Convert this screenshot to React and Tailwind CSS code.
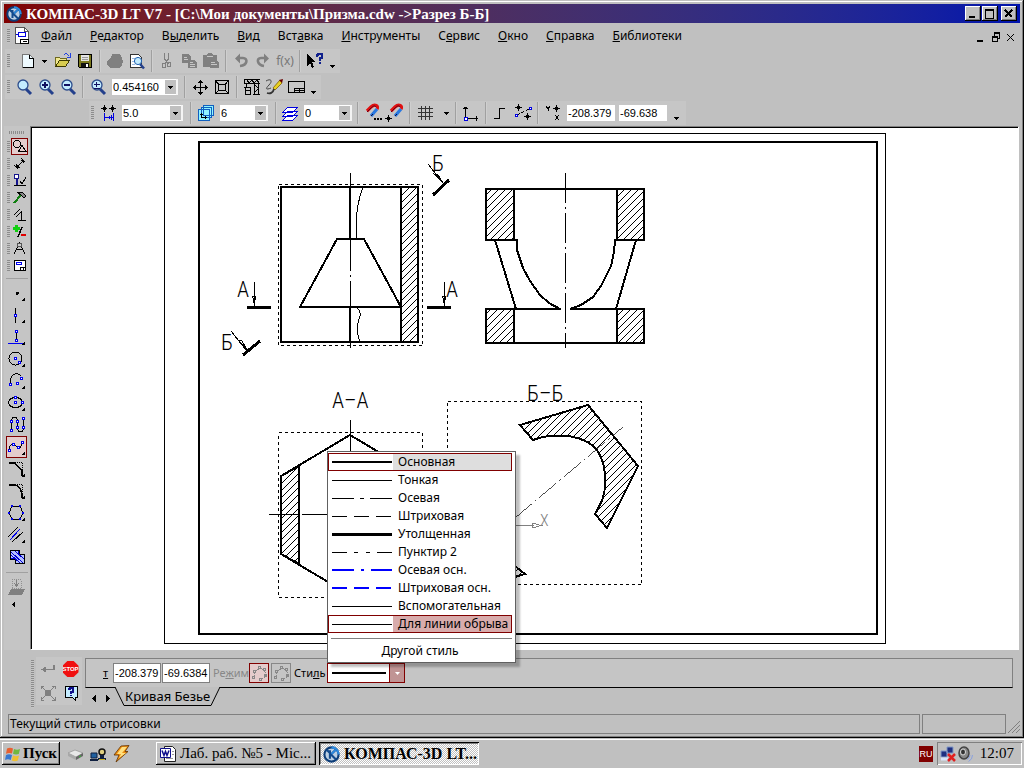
import React, { useState } from 'react';

const NUM_FONT = "font-['Liberation_Sans',sans-serif] text-[11px]";

// Small pixel icon, drawn on a square grid
const Icon = ({ size = 22, children, className = '' }) => (
  <svg
    width={size}
    height={size}
    viewBox={`0 0 ${size} ${size}`}
    fill="none"
    stroke="#000"
    shapeRendering="crispEdges"
    className={`shrink-0 ${className}`}
    aria-hidden="true"
  >
    {children}
  </svg>
);

const ToolButton = ({ label, children }) => (
  <button type="button" aria-label={label} className="flex h-[22px] w-[22px] shrink-0 items-center justify-center">
    {children}
  </button>
);

const Caret = ({ label, low }) => (
  <button type="button" aria-label={label} className={`flex h-[22px] w-3 shrink-0 justify-center ${low ? 'items-end pb-1' : 'items-center'}`}>
    <svg width="5" height="3" viewBox="0 0 5 3" aria-hidden="true" shapeRendering="crispEdges"><path d="M0 0h5v1H4v1H3v1H2V2H1V1H0z" /></svg>
  </button>
);

const Sep = () => <div className="mx-[3px] h-[22px] w-[2px] shrink-0 border-r border-[#cfcfcf] bg-[#a0a0a0]" />;

const Grip = ({ className = 'mr-[3px]' }) => (
  <div className={`ml-[2px] h-[14px] w-[3px] shrink-0 bg-[repeating-linear-gradient(#8c8c8c_0_1px,#c6c6c6_1px_2px)] ${className}`} />
);

const Combo = ({ label, value, className }) => (
  <div className={`relative h-4 shrink-0 border-r-2 border-[#f4f4f4] bg-white ${className}`}>
    <select aria-label={label} defaultValue={value} className={`block h-4 w-full appearance-none pl-px leading-4 outline-none ${NUM_FONT}`}>
      <option>{value}</option>
    </select>
    <span className="pointer-events-none absolute inset-y-px right-0 flex w-[11px] items-center justify-center bg-[#c0c0c0]">
      <svg width="5" height="3" viewBox="0 0 5 3" aria-hidden="true" shapeRendering="crispEdges"><path d="M0 0h5v1H4v1H3v1H2V2H1V1H0z" /></svg>
    </span>
  </div>
);

const KompasLogo = ({ size }) => (
  <svg width={size} height={size} viewBox="0 0 16 16" fill="none" className="shrink-0" aria-hidden="true">
    <circle cx="8" cy="8" r="6.7" fill="#bcd0e4" stroke="#0d3d78" strokeWidth="2" />
    <path d="M8 1.3A6.7 6.7 0 0 1 14.7 8" stroke="#2c8ae0" strokeWidth="2" />
    <path d="M3.5 3.5l3 3M6.5 4v8M12 3.5L7.5 8l4.5 4.5" stroke="#124a8c" strokeWidth="2" />
    <path d="M12 3.5L8 7.5" stroke="#2c8ae0" strokeWidth="1.6" />
  </svg>
);

const titleButton =
  'flex h-[15px] w-4 items-center justify-center bg-[#c0c0c0] shadow-[inset_-1px_-1px_#000,inset_1px_1px_#fff,inset_-2px_-2px_#808080]';

const TitleBar = () => (
  <header className="flex h-[19px] shrink-0 items-center bg-linear-to-r from-[#800000] to-[#0012ad] pr-[3px] pl-[2px] text-white">
    <KompasLogo size={16} />
    <h1 className="ml-1 flex-1 truncate font-['Liberation_Serif',serif] text-[15px] leading-[18px] font-bold">
      КОМПАС-3D LT V7 - [C:\Мои документы\Призма.cdw -&gt;Разрез Б-Б]
    </h1>
    <button type="button" aria-label="Свернуть" className={titleButton}>
      <Icon size={10}><path d="M1 8h6" strokeWidth="2" /></Icon>
    </button>
    <button type="button" aria-label="Развернуть" className={`ml-px ${titleButton}`}>
      <Icon size={10}><path d="M.5 1v8.5h8V1" /><path d="M0 1h9" strokeWidth="2" /></Icon>
    </button>
    <button type="button" aria-label="Закрыть" className={`ml-[3px] ${titleButton}`}>
      <Icon size={10}><path d="M1 1l7 7M8 1L1 8" strokeWidth="2" /></Icon>
    </button>
  </header>
);

const menu = [
  ['', 'Ф', 'айл'],
  ['', 'Р', 'едактор'],
  ['В', 'ы', 'делить'],
  ['', 'В', 'ид'],
  ['Вст', 'а', 'вка'],
  ['', 'И', 'нструменты'],
  ['С', 'е', 'рвис'],
  ['', 'О', 'кно'],
  ['', 'С', 'правка'],
  ['', 'Б', 'иблиотеки'],
];

const MenuBar = () => (
  <nav className="flex h-[25px] shrink-0 items-center pl-px">
    <Grip />
    <Icon size={18} className="mt-px">
      <path d="M2.500 .5h9l4 4v12h-13z" fill="#fff" stroke="#555" />
      <path d="M11.500 .5v4h4" stroke="#555" />
      <path d="M5.500 5.500h7v4h-7zM3 7.500h3" stroke="#0000e0" />
      <path d="M7.500 12.500h8v4h-8zM10 14.500h4" />
    </Icon>
    <div className="ml-[10px] flex gap-[18px]">
      {menu.map(([a, b, c]) => (
        <button key={b + c} type="button" className="text-[12px] leading-4">
          {a}<span className="underline">{b}</span>{c}
        </button>
      ))}
    </div>
    <div className="mr-1 ml-auto flex items-center gap-[3px] pt-1">
      <button type="button" aria-label="Свернуть документ"><Icon size={13}><path d="M6 10h6" strokeWidth="2" /></Icon></button>
      <button type="button" aria-label="Восстановить документ">
        <Icon size={13}><path d="M5.500 5V2.500h5v5H8M3.500 6.500h5v4h-5z" transform="translate(2 0)" /><path d="M7 2h6M5 6h6" strokeWidth="2" /></Icon>
      </button>
      <button type="button" aria-label="Закрыть документ"><Icon size={13}><path d="M4 3l7 7M11 3l-7 7" strokeWidth="1.400" /></Icon></button>
    </div>
  </nav>
);

const Lens = ({ children }) => (
  <Icon>
    <g shapeRendering="auto">
      <path d="M13 13l5 5" stroke="#24408c" strokeWidth="3" />
      <circle cx="10" cy="9" r="5" fill="#c4ecff" stroke="#2c4c8c" strokeWidth="1.300" />
    </g>
    <g stroke="#101060" strokeWidth="2">{children}</g>
  </Icon>
);

const StandardBar = () => (
  <div className="flex h-6 w-fit items-center bg-[#c6c6c6] pr-[2px]">
    <Grip className="mr-[6px]" />
    <ToolButton label="Создать">
      <Icon><path d="M6.500 4.500h7l4 4v9h-11z" fill="#eefaff" stroke="#777" /><path d="M13.500 4.500v4h4v9h-11" /></Icon>
    </ToolButton>
    <Caret label="Варианты создания" />
    <div className="w-[2px]" />
    <ToolButton label="Открыть">
      <Icon>
        <path d="M3.500 16.500v-9h4l1 1h6v3" fill="#f0e890" stroke="#706a20" />
        <path d="M3.500 16.500l4-6h10l-4 6z" fill="#d8cc50" stroke="#3c3800" />
        <path d="M11.500 5.500c2-3 4-2 6 1M18.500 3v4h-4" stroke="#2040e0" />
      </Icon>
    </ToolButton>
    <ToolButton label="Сохранить">
      <Icon>
        <path d="M4.500 4.500h13v13h-12l-1-1z" fill="#7c7a20" />
        <path d="M7 5h8v6H7z" fill="#e4e4e4" stroke="none" />
        <path d="M7 13h8v4H7z" fill="#111" stroke="none" /><path d="M12 14h2v3h-2z" fill="#fff" stroke="none" />
        <path d="M8 7.500h6M8 9.500h6" stroke="#999" />
      </Icon>
    </ToolButton>
    <Sep />
    <ToolButton label="Печать">
      <Icon><path d="M8 4h8l2 4 1 3-1 5-3 2H6l-3-3v-4l4-3z" fill="#808080" stroke="none" /></Icon>
    </ToolButton>
    <ToolButton label="Просмотр">
      <Icon>
        <path d="M4.500 4.500h8l3 3v10h-11z" fill="#fff" stroke="#333" /><path d="M6 8.500h3M6 11.500h3M6 14.500h3" stroke="#98b8e0" />
        <g shapeRendering="auto"><path d="M14 14l4 4.500" stroke="#24408c" strokeWidth="2.500" /><circle cx="12" cy="11" r="3.600" fill="#c4ecff" stroke="#2060b0" /></g>
      </Icon>
    </ToolButton>
    <Sep />
    <ToolButton label="Вырезать">
      <Icon><g stroke="#808080"><path d="M8.500 3v6l4 5M12.500 3v6l-4 5" strokeWidth="1.500" /><path d="M6.500 13.500h3v4h-3zM11.500 12.500h3v4h-3z" /></g></Icon>
    </ToolButton>
    <ToolButton label="Копировать">
      <Icon><path d="M4 4h6l3 3v3h3l3 3v5h-9v-5H4z" fill="#808080" stroke="none" /><path d="M6 7.500h3M6 9.500h4M12 12.500h3M12 14.500h5M12 16.500h5" stroke="#c6c6c6" /></Icon>
    </ToolButton>
    <ToolButton label="Вставить">
      <Icon><path d="M3 5h4l1-2h4l1 2h4v5l2 3v5h-9v-1H3z" fill="#808080" stroke="none" /><path d="M7 6.500h6M11 12.500h4M11 14.500h6" stroke="#c6c6c6" /></Icon>
    </ToolButton>
    <Sep />
    <ToolButton label="Отменить">
      <Icon><g shapeRendering="auto"><path d="M8 8h5c5 0 5 7-3 8" stroke="#808080" strokeWidth="2.600" /><path d="M5 8.500l5-5v10z" fill="#808080" stroke="none" /></g></Icon>
    </ToolButton>
    <ToolButton label="Повторить">
      <Icon><g shapeRendering="auto"><path d="M14 8H9c-5 0-4 7 3 8" stroke="#808080" strokeWidth="2.600" /><path d="M17 8.500l-5-5v10z" fill="#808080" stroke="none" /></g></Icon>
    </ToolButton>
    <ToolButton label="Переменные">
      <span className="font-['Noto_Sans',sans-serif] text-[12px] leading-4 text-[#777]">f(x)</span>
    </ToolButton>
    <Sep />
    <ToolButton label="Справка">
      <Icon>
        <path d="M3 4v12l3-3 2 5 2-1-2-5h4z" fill="#000" stroke="none" />
        <path d="M13 7V5h1V4h4v4h-2v3M15 13h2" stroke="#10208c" strokeWidth="2" />
      </Icon>
    </ToolButton>
    <Caret label="Ещё" low />
  </div>
);

const ViewBar = () => (
  <div className="flex h-6 w-fit items-center bg-[#c6c6c6] pr-[2px]">
    <Grip />
    <ToolButton label="Увеличить рамкой"><Lens /></ToolButton>
    <ToolButton label="Увеличить"><Lens><path d="M7 9h6M10 6v6" /></Lens></ToolButton>
    <ToolButton label="Уменьшить"><Lens><path d="M7 9h6" /></Lens></ToolButton>
    <Sep />
    <ToolButton label="Масштаб"><Lens><path d="M7 8.500h6M9.500 6v5M7 12.500h6" strokeWidth="1" /></Lens></ToolButton>
    <Combo label="Текущий масштаб" value="0.454160" className="mx-[3px] w-[66px]" />
    <Sep />
    <ToolButton label="Сдвинуть">
      <Icon><path d="M4 11.500h15M11.500 4v15" /><path d="M4 11.500l3-3v6zM19 11.500l-3-3v6zM11.500 4l-3 3h6zM11.500 19l-3-3h6z" fill="#000" stroke="none" /></Icon>
    </ToolButton>
    <ToolButton label="Показать всё">
      <Icon><path d="M4.500 4.500h13v13h-13zM7.500 8.500h7v6h-7zM5 5l3 4M17 5l-3 4M5 17l3-3M17 17l-3-3" /></Icon>
    </ToolButton>
    <Sep />
    <ToolButton label="Перестроить">
      <Icon>
        <path d="M3 3.500h16M3 7.500h16M3.500 4v4M6 4l2 3 3-3 2 3 3-3 2 3M13.500 8v10M17.500 8v10M14 9l3 3M17 13l-3 3M12 18.500h7" />
        <path d="M5.500 8v3M3 11.500h6M4.500 11v7h5v-7M4 14.500h6" />
      </Icon>
    </ToolButton>
    <ToolButton label="Свойства">
      <Icon>
        <g shapeRendering="auto">
          <path d="M3 5c5-3 7 0 3 4s-3 5 2 3" stroke="#444" />
          <path d="M17 4l2 3-7 7-2-2z" fill="#e8d020" stroke="#806000" strokeWidth=".8" />
          <path d="M16 4l3 3 1-4z" fill="#600" stroke="none" />
          <path d="M11 13c-1 4-4 5-7 4" stroke="#333" strokeWidth="1.800" />
        </g>
      </Icon>
    </ToolButton>
    <ToolButton label="Менеджер листов">
      <Icon><path d="M3.500 5.500h16v11h-16zM9.500 16v-4h10M9.500 14.500h10M14.500 12v4" /></Icon>
    </ToolButton>
    <Caret label="Ещё" low />
  </div>
);

const Magnet = () => (
  <g shapeRendering="auto" strokeWidth="3.200">
    <path d="M5 9l4-4c4-4 8-1 6 2" stroke="#e01010" />
    <path d="M15 7l-6 7" stroke="#2878e0" />
    <path d="M5 10l4-4c2-2 4-3 5-1" stroke="#600018" strokeWidth="1" />
    <path d="M9 14l2-2" stroke="#101040" strokeWidth="1" />
  </g>
);

const CurrentStateBar = () => (
  <div className="ml-[84px] flex h-6 w-fit items-center bg-[#c6c6c6] pr-1">
    <Grip />
    <ToolButton label="Шаг курсора">
      <Icon>
        <path d="M4 6.500h6M7.500 3v7M12 6.500h7M15.500 3v7M6.500 5.500h2v2h-2zM14.500 5.500h2v2h-2z" />
        <path d="M7.500 11v8M16.500 11v8M8 15.500h8M14 13v5M12 14v3" stroke="#0000e0" />
      </Icon>
    </ToolButton>
    <Combo label="Текущий шаг курсора" value="5.0" className="mr-1 ml-[3px] w-[61px]" />
    <Sep />
    <ToolButton label="Состояния видов">
      <Icon>
        <path d="M8.500 3.500h10v10h-10zM6.500 5.500h10v10h-10zM3.500 7.500h11v11h-11z" fill="#90f4ff" stroke="#1060c0" />
        <path d="M6.500 15v-4M5 12.500h3M6 15.500h6M10.500 14v3" />
      </Icon>
    </ToolButton>
    <Combo label="Текущий вид" value="6" className="mr-1 ml-[3px] w-12" />
    <Sep />
    <ToolButton label="Слои">
      <Icon>
        <g stroke="#0000e0" fill="#fff"><path d="M3 18l5-5h10l-5 5zM3 14l5-5h10l-5 5zM3 10l5-5h10l-5 5z" /></g>
      </Icon>
    </ToolButton>
    <Combo label="Текущий слой" value="0" className="mr-[2px] ml-[2px] w-12" />
    <Sep />
    <ToolButton label="Привязки"><Icon><Magnet /><path d="M12 17h2M15 17h2M18 17h2" strokeWidth="2" /></Icon></ToolButton>
    <ToolButton label="Запретить привязки"><Icon><g transform="translate(2 0)"><Magnet /></g><path d="M1 16.500h7M4.500 13v7M3.500 15.500h2v2h-2z" /></Icon></ToolButton>
    <Sep />
    <ToolButton label="Сетка"><Icon><path d="M4 6.500h15M4 10.500h15M4 14.500h15M7.500 4v14M11.500 4v14M15.500 4v14" stroke="#333" /></Icon></ToolButton>
    <div className="w-1" />
    <Caret label="Настройка сетки" />
    <Sep />
    <ToolButton label="Локальная СК">
      <Icon><path d="M5.500 15V5M3 6.500h5M4 5.500h3M7 16.500h11M16 14v5" /><path d="M4.500 15.500h3v3h-3z" fill="#fff" stroke="#0000e0" /></Icon>
    </ToolButton>
    <Sep />
    <ToolButton label="Ортогональное черчение"><Icon><path d="M4 16.500h5.500v-10h5.500" strokeWidth="1" /></Icon></ToolButton>
    <ToolButton label="Округление">
      <Icon><path d="M3 5.500h7M6.500 2v7M12 14.500h7M15.500 11v7M5.500 4.500h2v2h-2zM14.500 13.500h2v2h-2z" /><path d="M5 13l12-6" strokeDasharray="3 2" /><path d="M3.500 12.500h2v2h-2zM17.500 5.500h2v2h-2z" fill="#fff" stroke="#0000e0" /></Icon>
    </ToolButton>
    <Sep />
    <ToolButton label="Координаты">
      <Icon><path d="M4 4l2 3M8 4l-2 3M6.500 6v3M11 6.500h7M14.500 3v7M13.500 5.500h2v2h-2zM13 13l4 5M17 13l-4 5" /></Icon>
    </ToolButton>
    <input aria-label="Координата X" defaultValue="-208.379" className={`ml-[3px] h-4 w-12 bg-white pl-px outline-none ${NUM_FONT}`} />
    <input aria-label="Координата Y" defaultValue="-69.638" className={`mr-[3px] ml-1 h-4 w-12 bg-white pl-px outline-none ${NUM_FONT}`} />
    <Caret label="Ещё" low />
  </div>
);

// Blue square marker of a construction point
const P = ({ x, y }) => <rect x={x} y={y} width="2" height="2" fill="#fff" stroke="#0000f0" />;

const panels = [
  ['Геометрия', <g><circle cx="5" cy="5" r="3.500" /><path d="M10 6.500l-3.500 6h7.500z" /></g>],
  ['Размеры', <g><path d="M4 12l8-8M2 9l4 4M9 2l4 4" /><path d="M4 8v4h4zM8 4h4v4z" fill="#000" stroke="none" /></g>],
  ['Обозначения', <g><path d="M2.500 1.500h4v4h-4z" fill="#fff" stroke="#14148c" /><path d="M4.500 6v6" stroke="#14148c" strokeWidth="2" /><path d="M2 12.500h12M8 8l2 3 4-7" /></g>],
  ['Редактирование', <g><path d="M2 13l7-8" stroke="#108010" strokeWidth="2" /><path d="M5 2l5 0 4 4-2 2-3-3z" fill="#888" /></g>],
  ['Параметризация', <g><path d="M2 8l6-6M4 10l6-6M9.500 5v8M6 13.500h8" /></g>],
  ['Измерения', <g><path d="M4.500 1v7M1 4.500h7" stroke="#10d010" strokeWidth="3" /><path d="M6 13l4-10" strokeWidth="1.500" /><path d="M9 11h5" stroke="#e00000" strokeWidth="2" /></g>],
  ['Выделение', <g><path d="M7.500 1v2M6.500 4L2 13M8.500 4L13 13M4 8h7" /><circle cx="7.500" cy="4" r="2" fill="#ccc" stroke="#555" /></g>],
  ['Спецификация', <g><path d="M2.500 2.500h11v10h-11z" fill="#fff" /><path d="M4.500 4.500h5v2h-5z" stroke="#0000f0" /><path d="M8.500 12V9.500h5M11 10v3" /></g>],
];

const tools = [
  ['Точка', <path d="M10 10.500h3M11 9.500v3" strokeWidth="2" />],
  ['Вспомогательная прямая', <g><path d="M9.500 4v15" /><P x="8.500" y="10.500" /></g>],
  ['Отрезок', <g><path d="M10.500 5v10" /><path d="M2 17.500h17" stroke="#0000f0" /><P x="9.500" y="4.500" /><P x="9.500" y="13.500" /></g>],
  ['Окружность', <g><circle cx="9.500" cy="10.500" r="6.500" /><P x="8.500" y="9.500" /><P x="12.500" y="13.500" /></g>],
  ['Дуга', <g><path d="M4 13c0-8 6-12 11-7" /><P x="3.500" y="13.500" /><P x="10.500" y="12.500" /><P x="14.500" y="7.500" /></g>],
  ['Эллипс', <g><ellipse cx="9.500" cy="10.500" rx="7" ry="5" /><P x="8.500" y="4.500" /><P x="8.500" y="9.500" /><P x="15.500" y="9.500" /></g>],
  ['Непрерывный ввод объектов', <g><path d="M5.500 17V7c0-5 6-5 6 0v7c0 5 6 5 6 0V4" /><P x="4.500" y="6.500" /><P x="4.500" y="15.500" /><P x="10.500" y="6.500" /><P x="10.500" y="12.500" /><P x="16.500" y="3.500" /><P x="16.500" y="12.500" /></g>],
  ['Кривая Безье', <g><path d="M3 14c1-8 5-6 8-3s5-1 5-5" /><P x="2.500" y="13.500" /><P x="6.500" y="7.500" /><P x="11.500" y="10.500" /><P x="15.500" y="5.500" /></g>],
  ['Фаска', <g><path d="M3 5h6l7 8v5" strokeWidth="1.500" /><path d="M9 4.500h7.500v9" strokeDasharray="1 1" /></g>],
  ['Скругление', <g><path d="M3 5h4c6 0 9 5 9 13" strokeWidth="1.500" /><path d="M9 4.500h7.500v9" strokeDasharray="1 1" /></g>],
  ['Многоугольник', <g><path d="M6 4h8l3 7-3 6H6l-3-6z" /><path d="M5 4h2M13 4h2M2 11h2M16 11h2M5 17h2M13 17h2" stroke="#0000f0" strokeWidth="2" /></g>],
  ['Эквидистанта', <g><path d="M2 13L12 3M6 18L17 8" /><path d="M4 16L14 5" stroke="#0000f0" /></g>],
  ['Штриховка', <g><path d="M4.500 4.500h9v4h5v9h-9v-4h-5z" fill="#b4c0ff" strokeWidth="1.500" /><path d="M5 6l12 11M5 9l9 8M9 5l9 8M5 12l3 1M12 5l1 3" stroke="#0000d0" /></g>],
];

const LeftToolbar = () => (
  <aside aria-label="Компактная панель" className="flex w-[26px] shrink-0 flex-col bg-[#c5c5c5] pt-[5px]">
    <div className="mb-1 ml-[5px] h-[3px] w-4 bg-[repeating-linear-gradient(90deg,#8c8c8c_0_1px,#c6c6c6_1px_2px)]" />
    {panels.map(([label, art], i) => (
      <div key={label} className="flex h-[17px] shrink-0 items-center pl-px">
        <div className="ml-[2px] h-[11px] w-[3px] bg-[repeating-linear-gradient(#8c8c8c_0_1px,#c6c6c6_1px_2px)]" />
        <button type="button" aria-label={label} className={`ml-px border ${i === 0 ? 'border-[#800000] bg-[#e4cccc]' : 'border-transparent'}`}>
          <Icon size={15}>{art}</Icon>
        </button>
      </div>
    ))}
    <div className="mt-1 mb-[3px] ml-[2px] h-px w-[22px] bg-[#a0a0a0]" />
    {tools.map(([label, art]) => (
      <button
        key={label}
        type="button"
        aria-label={label}
        className={`ml-[2px] flex h-[22px] w-[21px] shrink-0 items-center justify-center border ${label === 'Кривая Безье' ? 'border-[#800000] bg-[#e4cccc]' : 'border-transparent'}`}
      >
        <Icon size={22}>
          {art}
          {!['Непрерывный ввод объектов', 'Штриховка'].includes(label) && <path d="M19 15v4h-4z" fill="#000" stroke="none" />}
        </Icon>
      </button>
    ))}
    <div className="mt-1 mb-[5px] ml-[2px] h-px w-[22px] bg-[#a0a0a0]" />
    <button type="button" aria-label="Редактировать" className="mx-auto">
      <Icon size={18}><path d="M4 1.500h9v9H4z" stroke="#909090" strokeDasharray="1 1" /><path d="M8.500 2v5M6 5l2.500 3L11 5" stroke="#808080" /><path d="M3 11h14l-3 6H0z" fill="#808080" stroke="none" /></Icon>
    </button>
    <button type="button" aria-label="Свернуть панель" className="mt-1 ml-1 w-fit">
      <Icon size={9}><path d="M7 2v5L4 4.500z" fill="#000" stroke="none" /></Icon>
    </button>
  </aside>
);

const cadText = {
  fontFamily: '"Roboto Condensed", Roboto, sans-serif',
  fontWeight: 300,
};

// Section areas filled with 45° lines
const hatched = [
  'M401 187h17v155h-17z',
  'M486 189h28v51h-28z',
  'M617 189h27v51h-27z',
  'M486 309h28v34h-28z',
  'M617 309h27v34h-27z',
  'M281 476l18-10v98l-18-10z',
  'M520 425l68-20 50 61-31 62-12-14c6-11 10-17 10-30 1-20-5-38-22-44-14-6-35-6-50 0z',
  'M505 558l20 16-10 3z',
];

const hatchLines = Array.from({ length: 150 }, (_, i) => `M${200 + i * 7} 180l-420 420`).join('');

const Drawing = () => (
  <svg viewBox="32 128 986 521" className="min-h-0 min-w-0 flex-1 bg-white" fill="none" stroke="#000" shapeRendering="crispEdges">
    <defs>
      <clipPath id="sections"><path d={hatched.join('')} /></clipPath>
    </defs>

    {/* Sheet frame */}
    <rect x="164.500" y="133.500" width="721" height="510" />
    <rect x="199" y="142" width="678" height="492" strokeWidth="2" />

    <path d={hatchLines} clipPath="url(#sections)" />
    <path d={hatched.join('')} strokeWidth="2" />

    {/* Front view */}
    <rect x="278.500" y="184.500" width="144" height="161" strokeDasharray="3 3" />
    <g strokeWidth="2">
      <rect x="281" y="187" width="137" height="155" />
      <path d="M350 187v52M350 307v35" />
      <path d="M337 239h27L401 307H300z" />
    </g>
    <path d="M350.500 173v14M350.500 239v32M350.500 275v2M350.500 281v26M350.500 342v6" />
    <path d="M363 187c-6 16-8 34-6 51M357 307c6 8 2 10 1 16s-1 12 2 19" />

    {/* Side view */}
    <g strokeWidth="2">
      <path d="M486 189h158M486 343h158M486 309h75M570 309h74M495 240l21 69M636 240l-20 69" />
      <path d="M514 240h3v10l6 18 7 13 10 14 9 8 11 6M617 240h-2l-1 12-3 14-10 20-8 11-12 8-11 4" />
    </g>
    <path d="M565.500 173V348" strokeDasharray="30 4 2 4" />

    {/* Section A-A */}
    <rect x="278.500" y="432.500" width="144" height="165" strokeDasharray="3 3" />
    <path d="M350 435l69 41v78l-69 41-69-41v-78z" strokeWidth="2" />
    <path d="M350.500 420v31M269 514.500h29M302 514.500h40" />

    {/* Section B-B */}
    <rect x="447.500" y="401.500" width="194" height="183" strokeDasharray="3 3" />
    <path d="M515 518L623 427" strokeWidth=".7" strokeDasharray="22 4 2 4" />
    <path d="M500 525.500h34M532 523v5l9-2.500z" stroke="#808080" />

    {/* Cutting plane marks */}
    <g strokeWidth="3">
      <path d="M247 307.500h24M427 307.500h24M433 195l16-15M243 355l17-14" />
    </g>
    <path d="M254.500 282v25M444.500 282v25M428 164l15 19M231 331l15 19" />
    <path d="M252.500 296h3l-1 9zM442.500 296h3l-1 9zM434 174l4 1 5 8zM238 340l4 1 5 9z" />

    <g fill="#000" stroke="none" shapeRendering="auto" fontSize="22" style={cadText}>
      <text x="237" y="297">А</text>
      <text x="446" y="297">А</text>
      <text x="432" y="171">Б</text>
      <text x="221" y="350">Б</text>
      <text x="332" y="408">А–А</text>
      <text x="527" y="401">Б–Б</text>
      <text x="540" y="526" fontSize="16" fill="#808080">X</text>
    </g>
  </svg>
);

const lineStyles = [
  { name: 'Основная', width: 2 },
  { name: 'Тонкая', width: 1 },
  { name: 'Осевая', width: 1, dash: '22 6 4 6' },
  { name: 'Штриховая', width: 1, dash: '15 7' },
  { name: 'Утолщенная', width: 3 },
  { name: 'Пунктир 2', width: 1, dash: '15 7 4 8 4 7' },
  { name: 'Осевая осн.', width: 2, dash: '22 7 3 7', color: '#0000ff' },
  { name: 'Штриховая осн.', width: 2, dash: '15 7', color: '#0000ff' },
  { name: 'Вспомогательная', width: 1 },
  { name: 'Для линии обрыва', width: 1 },
];

const LineSample = ({ width, dash, color = '#000' }) => (
  <svg width="60" height="4" viewBox="0 0 60 4" shapeRendering="crispEdges" aria-hidden="true">
    <path d={width === 2 ? 'M0 2H60' : 'M0 2.500H60'} stroke={color} strokeWidth={width} strokeDasharray={dash} />
  </svg>
);

const StyleMenu = ({ selected, onSelect }) => (
  <div className="absolute bottom-full left-0 z-10 w-[189px] border border-[#606060] bg-white pt-px pr-[3px] shadow-[4px_4px_2px_#00000040]">
    <ul>
      {lineStyles.map((s) => {
        const active = s.name === 'Для линии обрыва';
        const current = s.name === selected;
        return (
          <li key={s.name}>
            <button
              type="button"
              onClick={() => onSelect(s.name)}
              className={`flex h-[18px] w-full items-center border text-left text-[12px] leading-4 ${active || current ? 'border-[#800000]' : 'border-transparent'}`}
            >
              <span className="ml-[2px] flex h-full w-[62px] shrink-0 items-center pl-px"><LineSample {...s} /></span>
              <span className={`flex h-full flex-1 items-center pl-[5px] whitespace-nowrap ${current ? 'bg-[#dedede]' : ''} ${active ? 'bg-[#d8acac]' : ''}`}>{s.name}</span>
            </button>
          </li>
        );
      })}
    </ul>
    <hr className="mt-[5px] ml-[3px] border-[#808080]" />
    <button type="button" className="block h-[23px] w-full text-center text-[12px] leading-6">Другой стиль</button>
  </div>
);

const RingIcon = () => (
  <Icon size={18}>
    <g stroke="#888">
      <path d="M4 13V8l3-2 3-2 4 2 2 4-2 4-4 1" strokeDasharray="2 1" />
      <path d="M2.500 12.500h2v2h-2zM3.500 6.500h2v2h-2zM8.500 2.500h2v2h-2zM13.500 4.500h2v2h-2zM14.500 10.500h2v2h-2zM9.500 14.500h2v2h-2z" />
    </g>
  </Icon>
);

const PropertyPanel = () => {
  const [style, setStyle] = useState('Основная');
  const coord = `h-5 w-12 border border-[#808080] bg-white pl-px outline-none ${NUM_FONT}`;

  return (
    <section className="flex h-[61px] shrink-0 pr-[7px] pl-[27px]">
      <div className="mt-[10px] h-12 w-[3px] bg-[repeating-linear-gradient(#8c8c8c_0_1px,#c6c6c6_1px_2px)]" />
      <div className="mt-[7px] mr-[3px] ml-[2px] grid h-[48px] w-[46px] grid-cols-2 place-items-center bg-[#c6c6c6]">
        <button type="button" aria-label="Создать объект"><Icon size={18}><path d="M2 9.500h13v-5" stroke="#808080" strokeWidth="1.500" /><path d="M2 9.500l5-3v6z" fill="#808080" stroke="none" /></Icon></button>
        <button type="button" aria-label="Прервать команду" className="flex h-4 w-4 items-center justify-center bg-[#f01010] font-['Liberation_Sans',sans-serif] text-[6px] leading-4 font-bold text-white [clip-path:polygon(30%_0,70%_0,100%_30%,100%_70%,70%_100%,30%_100%,0_70%,0_30%)]">STOP</button>
        <button type="button" aria-label="Автосоздание"><Icon size={18}><path d="M6 6h6v6H6z" fill="#808080" stroke="none" /><path d="M2 2l14 14M16 2L2 16M2 5V2h3M13 2h3v3M2 13v3h3M13 16h3v-3" stroke="#808080" /></Icon></button>
        <button type="button" aria-label="Справка"><Icon size={18}><path d="M3.500 2.500h12v11h-2v3l-3-3h-7z" fill="#c4ecff" /><path d="M7 6V5h1V4h3v4H9v2M8 11.500h2" stroke="#10108c" strokeWidth="1.600" /></Icon></button>
      </div>
      <div className="mt-2 flex min-w-0 flex-1 flex-col">
        <div className="flex h-[30px] items-center border border-[#808080] border-b-black bg-[#c5c5c5] pl-[17px]">
          <label htmlFor="tx" className="w-[10px] text-[11px] underline">т</label>
          <input id="tx" defaultValue="-208.379" className={coord} />
          <input aria-label="т, координата Y" defaultValue="-69.6384" className={`ml-px ${coord}`} />
          <span className="ml-[3px] w-9 text-[11px] text-[#888]">Ре<u>ж</u>им</span>
          <button type="button" aria-label="Разомкнутый" className="border border-[#800000] bg-[#e4cccc]"><RingIcon /></button>
          <button type="button" aria-label="Замкнутый" className="ml-[2px] border border-[#888]"><RingIcon /></button>
          <span className="ml-[3px] w-[33px] text-[11px]">Сти<u>л</u>ь</span>
          <div className="relative">
            <button type="button" aria-label="Стиль линии" aria-haspopup="listbox" className="flex h-5 w-[78px] items-stretch border border-[#800000] bg-white">
              <span className="flex flex-1 items-center justify-center">
                <svg width="54" height="2" aria-hidden="true"><path d="M0 1H54" stroke="#000" strokeWidth="2" /></svg>
              </span>
              <span className="flex w-[15px] items-center justify-center border-l border-[#800000] bg-[#c09494]">
                <svg width="5" height="3" viewBox="0 0 5 3" aria-hidden="true"><path d="M0 0h5L2.500 3z" fill="#fff" /></svg>
              </span>
            </button>
            <StyleMenu selected={style} onSelect={setStyle} />
          </div>
        </div>
        <div className="-mt-px flex h-[19px]">
          <div className="mr-[3px] flex items-center gap-1 pt-1 pl-[5px]">
            <button type="button" aria-label="Предыдущая вкладка"><Icon size={9}><path d="M6 1v7L2 4.500z" fill="#000" stroke="none" /></Icon></button>
            <button type="button" aria-label="Следующая вкладка"><Icon size={9}><path d="M3 1v7l4-3.500z" fill="#000" stroke="none" /></Icon></button>
          </div>
          <svg width="10" height="19" className="shrink-0" aria-hidden="true"><path d="M0 0h10v19z" fill="#c0c0c0" /><path d="M0 0l9 18.500h1" fill="none" stroke="#000" /></svg>
          <button type="button" className="border-b border-black bg-[#c0c0c0] text-[13px] leading-[18px]">Кривая Безье</button>
          <svg width="10" height="19" className="shrink-0" aria-hidden="true"><path d="M10 0H0v19z" fill="#c0c0c0" /><path d="M10 0L1 18.500H0" fill="none" stroke="#000" /></svg>
        </div>
      </div>
    </section>
  );
};

const StatusBar = () => (
  <footer className="flex h-[25px] shrink-0 items-center pl-1 text-[12px]">
    <div className="h-5 flex-1 border border-[#808080] pl-px leading-[18px]">Текущий стиль отрисовки</div>
    <div className="ml-[2px] h-5 w-[84px] border border-[#808080]" />
    <Icon size={14} className="mt-1 self-center"><path d="M2 14L14 2M6 14l8-8M10 14l4-4" stroke="#808080" /></Icon>
  </footer>
);

const raised = 'shadow-[inset_-1px_-1px_#000,inset_1px_1px_#fff,inset_-2px_-2px_#808080]';

const TaskBar = () => (
  <footer className="flex h-[30px] shrink-0 items-center border-t border-[#c0c0c0] pr-[2px] pl-[2px] font-['Liberation_Serif',serif] text-[15px] shadow-[inset_0_1px_#fff]">
    <button type="button" className={`flex h-[23px] w-[58px] items-center gap-[2px] pl-[3px] font-bold ${raised}`}>
      <svg width="16" height="16" viewBox="0 0 16 16" className="shrink-0" aria-hidden="true">
        <path d="M2 2.500q3-1.500 6 0L7 7.500q-3-1-6 .3z" fill="#e86030" />
        <path d="M9 3q3 1.500 6 0l-1.200 5q-3 1-5.800-.2z" fill="#70b840" />
        <path d="M1 9q3-1.500 6 0l-1.200 5q-3-1.500-5.800 0z" fill="#3878d0" />
        <path d="M8 9.500q3 1.500 6 0L12.800 14.500q-3 1.500-6 0z" fill="#f0c030" />
      </svg>
      Пуск
    </button>
    <div className="ml-[7px] flex items-center gap-[6px]">
      <button type="button" aria-label="Мой компьютер">
        <svg width="17" height="16" viewBox="0 0 17 16" aria-hidden="true"><path d="M1 7l7-3 8 3-7 4z" fill="#e8e8e8" stroke="#888" strokeWidth=".6" /><path d="M1 7v3l8 4v-3z" fill="#a8a8a8" /><path d="M9 11v3l7-4V7z" fill="#666" /><path d="M12 11l2-1" stroke="#30c030" /></svg>
      </button>
      <button type="button" aria-label="Подключение">
        <svg width="17" height="16" viewBox="0 0 17 16" aria-hidden="true"><path d="M1 7h6v5H1z" fill="#2060a0" stroke="#102040" /><path d="M0 14h8M8 13h8" stroke="#102040" strokeWidth="2" /><circle cx="12" cy="6" r="3" fill="#e0d080" stroke="#111" strokeWidth="1.500" /><path d="M10 9h4v4h-4z" fill="#102040" /><path d="M9 13.500h6" stroke="#c8b020" /></svg>
      </button>
      <button type="button" aria-label="Winamp">
        <svg width="17" height="18" viewBox="0 0 17 18" aria-hidden="true"><path d="M8 1l8-.5-4 6h3L3 17l3-7H1z" fill="#f09010" stroke="#603000" strokeWidth=".8" /><path d="M9 2h5l-5 6h4L6 13l2-4H4z" fill="#ffe080" /></svg>
      </button>
    </div>
    <button type="button" className={`ml-[26px] flex h-[23px] w-40 items-center gap-[3px] pl-1 whitespace-nowrap ${raised}`}>
      <svg width="17" height="16" viewBox="0 0 17 16" className="shrink-0" fill="none" aria-hidden="true">
        <path d="M4.500.5h8l3 3v12h-11z" fill="#fff" stroke="#222" /><path d="M12 5.500h2M12 8.500h2M6 12.500h7" stroke="#999" />
        <path d="M.5 2.500h10v9H.5z" fill="#fff" stroke="#10108c" /><path d="M2 4.500l2 5 1.500-4 1.500 4 2-5" stroke="#10108c" strokeWidth="1.500" />
      </svg>
      Лаб. раб. №5 - Mic...
    </button>
    <button type="button" className="ml-[3px] flex h-[23px] w-40 items-center gap-1 bg-[repeating-conic-gradient(#fff_0_25%,#c0c0c0_0_50%)] bg-size-[2px_2px] pt-px pl-1 text-[16px] font-bold whitespace-nowrap shadow-[inset_1px_1px_#000,inset_-1px_-1px_#fff,inset_2px_2px_#808080]">
      <KompasLogo size={17} />
      КОМПАС-3D LT...
    </button>
    <button type="button" aria-label="Язык ввода" className="ml-auto h-4 w-[14px] bg-[#800000] text-center font-['Liberation_Sans',sans-serif] text-[9px] leading-4 text-white">RU</button>
    <div className="ml-1 flex h-[23px] w-[85px] items-center pl-[2px] shadow-[inset_1px_1px_#808080,inset_-1px_-1px_#fff]">
      <svg width="18" height="18" viewBox="0 0 18 18" fill="none" aria-hidden="true">
        <path d="M8 2h6v6H8zM2 6h6v6H2z" fill="#203080" stroke="#8098c8" /><path d="M2 14h7" stroke="#d8e4f8" strokeWidth="3" /><path d="M9 9l7 7M16 9l-7 7" stroke="#e02020" strokeWidth="2.500" />
      </svg>
      <svg width="17" height="18" viewBox="0 0 17 18" fill="none" aria-hidden="true">
        <ellipse cx="7" cy="8" rx="5" ry="6" fill="#888" stroke="#444" strokeWidth="1.500" /><ellipse cx="6" cy="7" rx="2.500" ry="3" fill="#333" stroke="#ddd" />
        <path d="M13 10q0 3-3 4.500M15.500 10q0 4.500-4 6.500" stroke="#88a0e0" />
      </svg>
      <time className="ml-auto pr-2">12:07</time>
    </div>
  </footer>
);

const App = () => (
  <div className="flex h-screen flex-col bg-[#c0c0c0] font-['Noto_Sans',sans-serif] text-black">
    <main className="flex min-h-0 flex-1 flex-col p-1 pb-[2px] shadow-[inset_-1px_-1px_#000,inset_1px_1px_#c0c0c0,inset_-2px_-2px_#808080,inset_2px_2px_#fff]">
      <TitleBar />
      <MenuBar />
      <div className="flex h-[26px] shrink-0 items-center pl-px"><StandardBar /></div>
      <div className="flex h-[26px] shrink-0 items-center pl-px"><ViewBar /></div>
      <div className="flex h-[26px] shrink-0 items-center pl-px"><CurrentStateBar /></div>
      <div className="flex min-h-0 flex-1 pr-px">
        <LeftToolbar />
        <div className="flex min-w-0 flex-1 border-t border-r border-b border-l border-t-[#808080] border-r-white border-b-white border-l-[#808080]">
          <div className="flex min-w-0 flex-1 border-t border-l border-black">
            <Drawing />
          </div>
        </div>
      </div>
      <PropertyPanel />
      <StatusBar />
    </main>
    <TaskBar />
  </div>
);

export default App;
